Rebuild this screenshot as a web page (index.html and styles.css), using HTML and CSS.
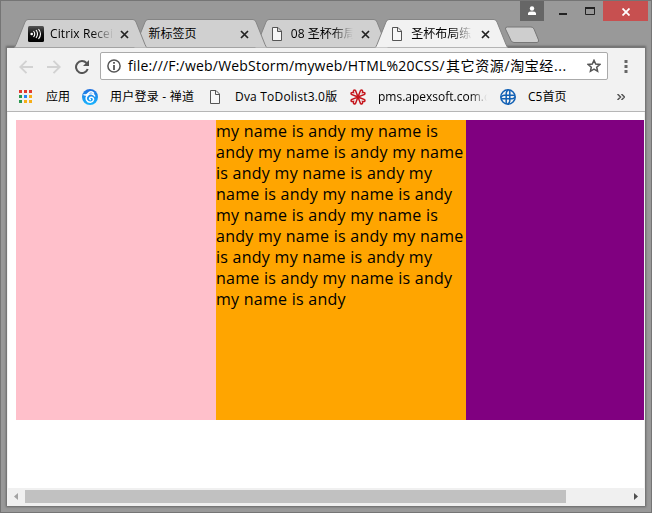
FILE: index.html
```html
<!DOCTYPE html>
<html lang="zh-CN">
<head>
<meta charset="utf-8">
<title>圣杯布局练习</title>
<link rel="stylesheet" href="styles.css">
</head>
<body>
<svg width="0" height="0" class="defs">
  <symbol id="tab" viewBox="0 0 133 29"><path d="M0 28.500Q1 28 2 25.500L11 3Q12 .5 14 .5H119Q121 .5 122 3L131 25.500Q132 28 133 28.500"/></symbol>
  <symbol id="page" viewBox="0 0 10 14"><path d="M.5.5H6L9.500 4V13.500H.5ZM5.500.5V4.500H9.500" fill="#f7f7f7" stroke="#555"/></symbol>
  <symbol id="close" viewBox="0 0 9 9"><path d="M1 1L8 8M8 1L1 8" fill="none" stroke="#222" stroke-width="1.700"/></symbol>
</svg>
<div class="window">
  <div class="controls">
    <div class="user"><svg width="10" height="10"><circle cx="5" cy="2.500" r="2.200" fill="#fff"/><path d="M1 9V7Q1.500 5.600 5 5.600T9 7V9Z" fill="#fff"/></svg></div>
    <div class="control minimize"><svg width="8" height="3"><path d="M0 2H8" stroke="#222" stroke-width="2"/></svg></div>
    <div class="control maximize"><svg width="10" height="8"><path d="M.5 0V7.500H9.500V0" fill="none" stroke="#222"/><path d="M0 1H10" stroke="#222" stroke-width="2"/></svg></div>
    <div class="quit"><svg width="8" height="8"><path d="M.5.5L7.500 7.500M7.500.5L.5 7.500" stroke="#fff" stroke-width="1.800"/></svg></div>
  </div>
  <div class="tabs">
    <div class="tab first"><svg class="shape"><use href="#tab"/></svg>
      <svg class="citrix" width="16" height="16"><defs><linearGradient id="dark" x2="0" y2="1"><stop stop-color="#555"/><stop offset=".5" stop-color="#111"/><stop offset="1" stop-color="#000"/></linearGradient></defs><rect width="16" height="16" rx="1.500" fill="url(#dark)"/><circle cx="3.700" cy="8" r="1.300" fill="#fff"/><path d="M5.500 5Q8 8 5.500 11M8 4Q11 8 8 12M10.500 3Q14.500 8 10.500 13" fill="none" stroke="#fff" stroke-width="1.100"/></svg>
      <span class="label fade latin">Citrix Recei</span><svg class="x"><use href="#close"/></svg></div>
    <div class="tab second"><svg class="shape"><use href="#tab"/></svg><span class="label">新标签页</span><svg class="x"><use href="#close"/></svg></div>
    <div class="tab third"><svg class="shape"><use href="#tab"/></svg><svg class="page"><use href="#page"/></svg><span class="label fade">08 圣杯布局</span><svg class="x"><use href="#close"/></svg></div>
    <div class="tab active"><svg class="shape"><use href="#tab"/></svg><svg class="page"><use href="#page"/></svg><span class="label fade">圣杯布局练</span><svg class="x"><use href="#close"/></svg></div>
    <svg class="newtab" width="36" height="18"><path d="M3.500 1H27Q29 1 30 3L34.500 14Q35 16.500 33 16.500H10Q8 16.500 7 14.500L1.500 3Q1 1 3.500 1Z" fill="#cecece" stroke="#777"/></svg>
  </div>
  <div class="panel">
    <div class="toolbar">
      <svg class="back" width="14" height="14"><path d="M14 7H1.500M7.500 .8L1.300 7L7.500 13.200" fill="none" stroke="#d2d2d2" stroke-width="1.900"/></svg>
      <svg class="forward" width="14" height="14"><path d="M0 7H12.500M6.500 .8L12.700 7L6.500 13.200" fill="none" stroke="#d2d2d2" stroke-width="1.900"/></svg>
      <svg class="reload" width="14" height="14"><path d="M12.700 9A6 6 0 1 1 11.500 3" fill="none" stroke="#555" stroke-width="2"/><path d="M14 0V6H8Z" fill="#555"/></svg>
      <div class="address">
        <svg width="14" height="14"><circle cx="7" cy="7" r="6.100" fill="none" stroke="#555" stroke-width="1.500"/><path d="M7 3V4.700M7 6V11" stroke="#555" stroke-width="1.800"/></svg>
        <span class="url"><span class="path">file:///F:/web/WebStorm/myweb/HTML%20CSS/</span><span class="cjk">其它资源/淘宝经...</span></span>
        <svg class="star" width="14" height="14"><path d="M7 1.300L8.700 5.100L12.800 5.500L9.700 8.200L10.600 12.300L7 10.200L3.400 12.300L4.300 8.200L1.200 5.500L5.300 5.100Z" fill="none" stroke="#555" stroke-width="1.500"/></svg>
      </div>
      <svg class="more" width="4" height="14"><path d="M.5 0H3.500V3H.5ZM.5 5H3.500V8H.5ZM.5 10H3.500V13H.5Z" fill="#666"/></svg>
    </div>
    <div class="bookmarks">
      <svg class="apps" width="13" height="14"><path d="M0 0h3v3H0zM5 0h3v3H5zM10 0h3v3h-3z" fill="#e33b2e"/><path d="M0 5h3v3H0zM0 10h3v3H0z" fill="#2b9950"/><path d="M5 5h3v3H5z" fill="#2385f5"/><path d="M10 5h3v3h-3zM5 10h3v3H5zM10 10h3v3h-3z" fill="#f6ae17"/></svg>
      <span class="b1">应用</span>
      <svg class="i2" width="16" height="16"><defs><linearGradient id="blue" x2="0" y2="1"><stop stop-color="#2170df"/><stop offset="1" stop-color="#18b5ff"/></linearGradient></defs><circle cx="8" cy="8" r="8" fill="url(#blue)"/><path d="M1.500 5.500Q4 7 6 4.500Q9 1 12 4.500M13 7.500C12 4.500 8 4 5.500 6.500C2.500 9.500 5 13.500 8.500 13.300C12 13 12.500 9 10 8.300C7.500 7.700 6.500 10.500 9 10.800" fill="none" stroke="#fff" stroke-width="1.400"/></svg>
      <span class="b2">用户登录 - 禅道</span>
      <svg class="page i3"><use href="#page"/></svg>
      <span class="b3">Dva ToDolist3.0版</span>
      <svg class="i4" width="16" height="16"><g fill="none" stroke="#c5161d" stroke-width="1.500"><path d="M8 8L1.500 5.500Q0 3 3.500 3.500Q3 0 5.500 1.500ZM8 8L10.500 1.500Q13 0 12.500 3.500Q16 3 14.500 5.500ZM8 8L14.500 10.500Q16 13 12.500 12.500Q13 16 10.500 14.500ZM8 8L5.500 14.500Q3 16 3.500 12.500Q0 13 1.500 10.500Z"/></g></svg>
      <span class="b4">pms.apexsoft.com.c</span>
      <svg class="i5" width="16" height="16"><circle cx="8" cy="8" r="7.200" fill="none" stroke="#1261b5" stroke-width="1.500"/><path d="M6.200 15V4Q6.200 2 8.500 1M9.800 1V12Q9.800 14 7.500 15M1 9.800H12Q14 9.800 15 7.500M15 6.200H4Q2 6.200 1 8.500" fill="none" stroke="#1261b5" stroke-width="1.500"/></svg>
      <span class="b5">C5首页</span>
      <svg class="overflow" width="8" height="6"><path d="M.5 0L3.500 3L.5 6M4.500 0L7.500 3L4.500 6" fill="none" stroke="#555" stroke-width="1.500"/></svg>
    </div>
    <main class="content">
      <div class="left"></div>
      <div class="middle"><div>my name is andy my name is</div><div>andy my name is andy my name</div><div>is andy my name is andy my</div><div>name is andy my name is andy</div><div>my name is andy my name is</div><div>andy my name is andy my name</div><div>is andy my name is andy my</div><div>name is andy my name is andy</div><div>my name is andy</div></div>
      <div class="right"></div>
    </main>
    <div class="scrollbar">
      <svg width="17" height="18"><path d="M10 5V12L6 8.500Z" fill="#a3a3a3"/></svg>
      <div class="thumb"></div>
      <svg width="17" height="18"><path d="M7 5V12L11 8.500Z" fill="#505050"/></svg>
    </div>
  </div>
</div>
</body>
</html>
```
FILE: styles.css
```css
* { box-sizing: border-box; }
body { margin: 0; overflow: hidden; font: 12px/16px "Open Sans", "Noto Sans CJK SC", sans-serif; color: #000; }
svg { display: block; flex: none; }
.defs { position: absolute; }
.window { width: 652px; height: 513px; background: #999; border: 1px solid #757575; padding: 0 6px; }
.controls { height: 18px; display: flex; justify-content: flex-end; margin-right: -3px; }
.user { width: 24px; height: 20px; background: #666; padding: 5px 7px; }
.control { height: 20px; }
.minimize { width: 27px; padding: 11px 0 0 15px; }
.maximize { width: 32px; padding: 6px 0 0 14px; }
.quit { width: 45px; height: 20px; background: #c75050; padding: 7px 0 0 19px; }
.tabs { height: 28px; display: flex; padding-left: 7px; position: relative; }
.tab { position: relative; flex: none; width: 133px; height: 29px; margin-right: -12.600px; display: flex; align-items: center; padding: 1px 0 0 14px; z-index: 3; }
.second { z-index: 2; }
.third { z-index: 1; }
.active { z-index: 4; }
.shape { position: absolute; left: 0; top: 0; width: 133px; height: 29px; fill: #d0d0d0; stroke: #858585; }
.active .shape { fill: #f2f2f2; }
.label { width: 64px; margin-left: 6px; overflow: hidden; white-space: nowrap; position: relative; }
.latin { letter-spacing: .1px; }
.second .label { width: 86px; margin-left: 0; }
.third .label, .active .label { width: 62px; margin-left: 9px; }
.fade { -webkit-mask-image: linear-gradient(90deg, #000 65%, transparent); mask-image: linear-gradient(90deg, #000 65%, transparent); }
.x { position: absolute; left: 106px; top: 11px; width: 9px; height: 9px; }
.citrix { position: relative; }
.page { position: relative; width: 10px; height: 14px; }
.tab .page { margin-left: 3px; }
.newtab { margin: 7px 0 0 8px; }
.panel { height: 459px; width: 638px; display: flex; flex-direction: column; background: #f2f2f2; border: 1px solid #777; border-width: 1px 0 0; box-shadow: 0 0 2px 1px #666; }
.toolbar { height: 37px; display: flex; align-items: center; padding: 0 17px 0 12px; }
.forward { margin-left: 14px; }
.reload { margin-left: 14px; }
.address { margin-left: 11px; width: 508px; height: 28px; border: 1px solid #aaa; border-radius: 2px; background: #fff; display: flex; align-items: center; padding: 0 6px; margin-top: -1px; }
.url { display: flex; margin-left: 7px; white-space: nowrap; font-size: 14px; line-height: 20px; }
.path { width: 318px; letter-spacing: .2px; }
.cjk { letter-spacing: .6px; }
.star { margin-left: auto; }
.more { margin-left: auto; }
.bookmarks { height: 27px; display: flex; align-items: center; padding: 0 13px 2px 12px; border-bottom: 1px solid #b6b6b6; white-space: nowrap; }
.b1 { margin-left: 14px; width: 36px; }
.b2 { margin-left: 12px; width: 100px; letter-spacing: .25px; }
.i3 { width: 10px; }
.b3 { margin-left: 15px; width: 115px; letter-spacing: .2px; }
.b4 { margin-left: 12px; width: 109px; overflow: hidden; -webkit-mask-image: linear-gradient(90deg, #000 85%, transparent); mask-image: linear-gradient(90deg, #000 85%, transparent); }
.i5 { margin-left: 13px; }
.b5 { margin-left: 12px; }
.overflow { margin-left: auto; margin-right: 7px; }
.content { flex: 1; display: flex; align-items: flex-start; background: #fff; margin: 0 1px; padding: 8px 0 0 8px; }
.content > div { height: 300px; }
.left { width: 200px; background: pink; }
.middle { width: 250px; padding-top: 1px; background: orange; font-size: 16px; line-height: 21px; letter-spacing: .26px; white-space: nowrap; }
.right { flex: 1; background: purple; }
.scrollbar { height: 18px; display: flex; margin: 0 1px; background: #f0f0f0; justify-content: space-between; }
.thumb { width: 541px; height: 13px; margin: 2px auto 0 0; background: #c1c1c1; }
```
